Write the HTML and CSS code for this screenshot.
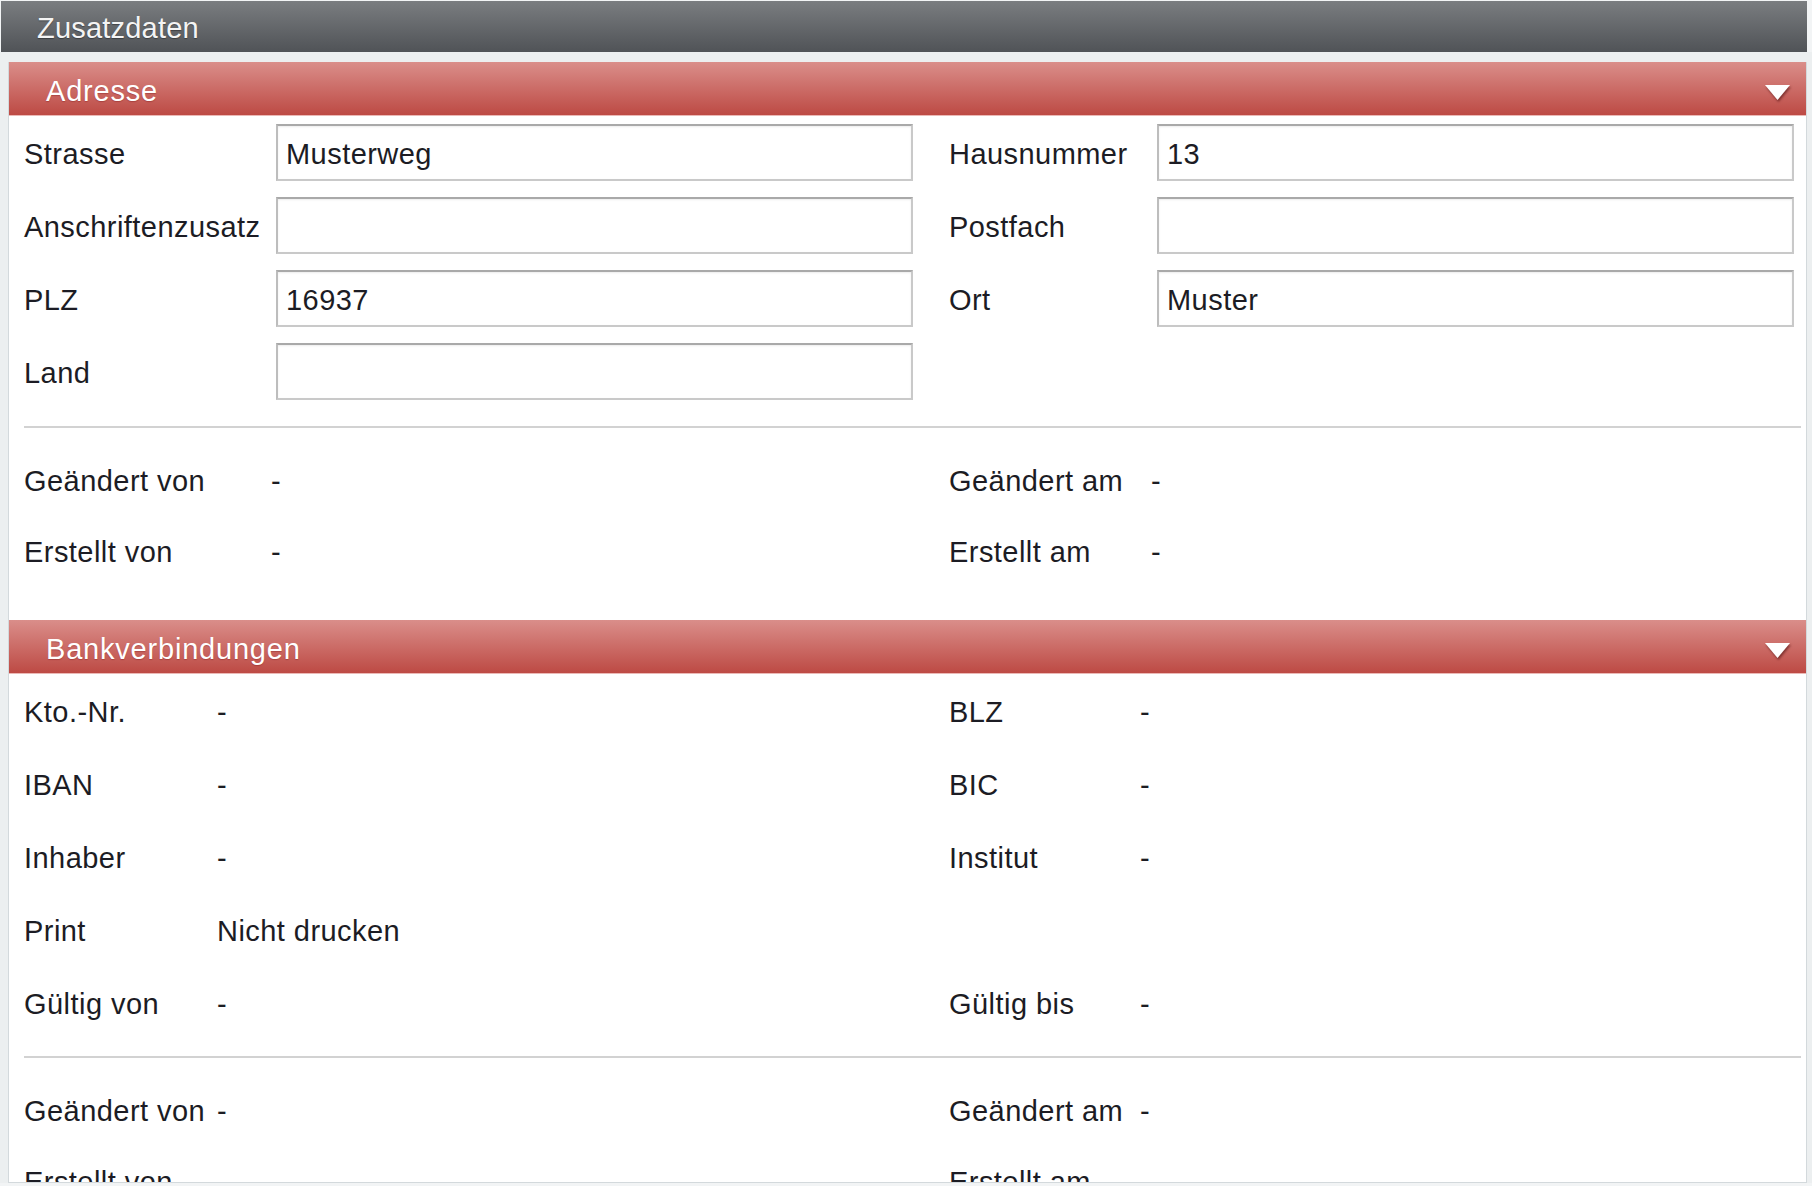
FILE: index.html
```html
<!DOCTYPE html>
<html lang="de">
<head>
    <meta charset="UTF-8">
    <meta name="viewport" content="width=device-width, initial-scale=1.0">
    <title>Zusatzdaten</title>
    <link rel="stylesheet" href="styles.css">
</head>
<body>
    <div class="window">
        <div class="window-title">Zusatzdaten</div>

        <div class="window-body">
            <div class="sheet">

                <!-- Adresse -->
                <div class="section-head">
                    <span>Adresse</span>
                    <svg class="toggle" width="28" height="19" viewBox="0 0 28 19">
                        <polygon points="1,1 26,1 13.5,16" fill="#fff"/>
                    </svg>
                </div>
                <div class="section section-address">
                    <div class="form-grid">
                        <label for="strasse">Strasse</label>
                        <input type="text" id="strasse" value="Musterweg">
                        <label class="label-right" for="hausnummer">Hausnummer</label>
                        <input type="text" id="hausnummer" value="13">

                        <label for="zusatz">Anschriftenzusatz</label>
                        <input type="text" id="zusatz" value="">
                        <label class="label-right" for="postfach">Postfach</label>
                        <input type="text" id="postfach" value="">

                        <label for="plz">PLZ</label>
                        <input type="text" id="plz" value="16937">
                        <label class="label-right" for="ort">Ort</label>
                        <input type="text" id="ort" value="Muster">

                        <label for="land">Land</label>
                        <input type="text" id="land" value="">
                    </div>

                    <div class="divider"></div>

                    <div class="info-grid info-address">
                        <span>Geändert von</span><span>-</span>
                        <span>Geändert am</span><span>-</span>
                        <span>Erstellt von</span><span>-</span>
                        <span>Erstellt am</span><span>-</span>
                    </div>
                </div>

                <!-- Bankverbindungen -->
                <div class="section-head">
                    <span>Bankverbindungen</span>
                    <svg class="toggle" width="28" height="19" viewBox="0 0 28 19">
                        <polygon points="1,1 26,1 13.5,16" fill="#fff"/>
                    </svg>
                </div>
                <div class="section section-bank">
                    <div class="info-grid info-bank">
                        <span>Kto.-Nr.</span><span>-</span>
                        <span>BLZ</span><span>-</span>
                        <span>IBAN</span><span>-</span>
                        <span>BIC</span><span>-</span>
                        <span>Inhaber</span><span>-</span>
                        <span>Institut</span><span>-</span>
                        <span>Print</span><span>Nicht drucken</span>
                        <span></span><span></span>
                        <span>Gültig von</span><span>-</span>
                        <span>Gültig bis</span><span>-</span>
                    </div>

                    <div class="divider divider-bank"></div>

                    <div class="info-grid info-bank-meta">
                        <span>Geändert von</span><span>-</span>
                        <span>Geändert am</span><span>-</span>
                        <span>Erstellt von</span><span>-</span>
                        <span>Erstellt am</span><span>-</span>
                    </div>
                </div>

            </div>
        </div>
    </div>
</body>
</html>
```

FILE: styles.css
```css
body {
    margin: 0;
    padding: 0;
    background-color: #f2f4f5;
    font-family: "Liberation Sans", Arial, sans-serif;
    color: #1c1c24;
}

.window {
    padding: 1px 0 0 1px;
}

.window-title {
    width: 1806px;
    height: 51px;
    box-sizing: border-box;
    padding: 4px 0 0 36px;
    display: flex;
    align-items: center;
    background: linear-gradient(to bottom, #7a7d80, #505357);
    color: #f4f4f4;
    font-size: 29px;
    letter-spacing: 0.2px;
    text-shadow: 0 1px 1px rgba(0, 0, 0, 0.35);
}

.window-body {
    padding: 10px 0 0 8px;
    background-color: #eceff0;
    margin-left: -1px;
}

.sheet {
    width: 1799px;
    height: 1121px;
    box-sizing: border-box;
    background-color: #fff;
    border: 1px solid #d3d9dc;
    border-top: none;
    overflow: hidden;
}

.section-head {
    height: 54px;
    box-sizing: border-box;
    padding: 5px 14px 0 37px;
    display: flex;
    align-items: center;
    justify-content: space-between;
    background: linear-gradient(to bottom, #da8e8a, #bd4a44);
    border-bottom: 1px solid #ebb9b6;
    color: #fff;
    font-size: 29px;
    letter-spacing: 0.8px;
    text-shadow: 0 1px 1px rgba(120, 20, 20, 0.35);
}

.toggle {
    margin-top: 4px;
    filter: drop-shadow(1px 2px 1px rgba(70, 10, 10, 0.55));
}

.section {
    padding: 0 5px 0 15px;
    font-size: 29px;
    letter-spacing: 0.45px;
}

.section-address {
    padding-top: 8px;
    padding-bottom: 32px;
}

.section-bank {
    padding-top: 2px;
}

.form-grid {
    display: grid;
    grid-template-columns: 252px 637px 244px 637px;
    grid-auto-rows: 57px;
    row-gap: 16px;
    align-items: center;
}

.form-grid label {
    white-space: nowrap;
    padding-top: 4px;
}

.form-grid .label-right {
    padding-left: 36px;
}

.form-grid input {
    height: 57px;
    width: 637px;
    box-sizing: border-box;
    margin: 0;
    padding: 4px 8px 0;
    border: 2px solid #c9c9c9;
    border-top-color: #a9a9a9;
    border-left-color: #bdbdbd;
    box-shadow: inset 0 1px 2px rgba(0, 0, 0, 0.08);
    font-family: "Liberation Sans", Arial, sans-serif;
    font-size: 29px;
    letter-spacing: 0.45px;
    color: #1c1c24;
    background-color: #fff;
    outline: none;
}

.divider {
    margin-top: 26px;
    height: 2px;
    background-color: #d2d2d2;
}

.divider-bank {
    margin-top: 15px;
}

.info-grid {
    display: grid;
    align-items: center;
    white-space: nowrap;
}

.info-address {
    padding-top: 18px;
    grid-template-columns: 247px 678px 202px auto;
    grid-auto-rows: 71px;
}

.info-bank {
    grid-template-columns: 193px 732px 191px auto;
    grid-auto-rows: 73px;
}

.info-bank-meta {
    padding-top: 18px;
    grid-template-columns: 193px 732px 191px auto;
    grid-auto-rows: 71px;
}
```
